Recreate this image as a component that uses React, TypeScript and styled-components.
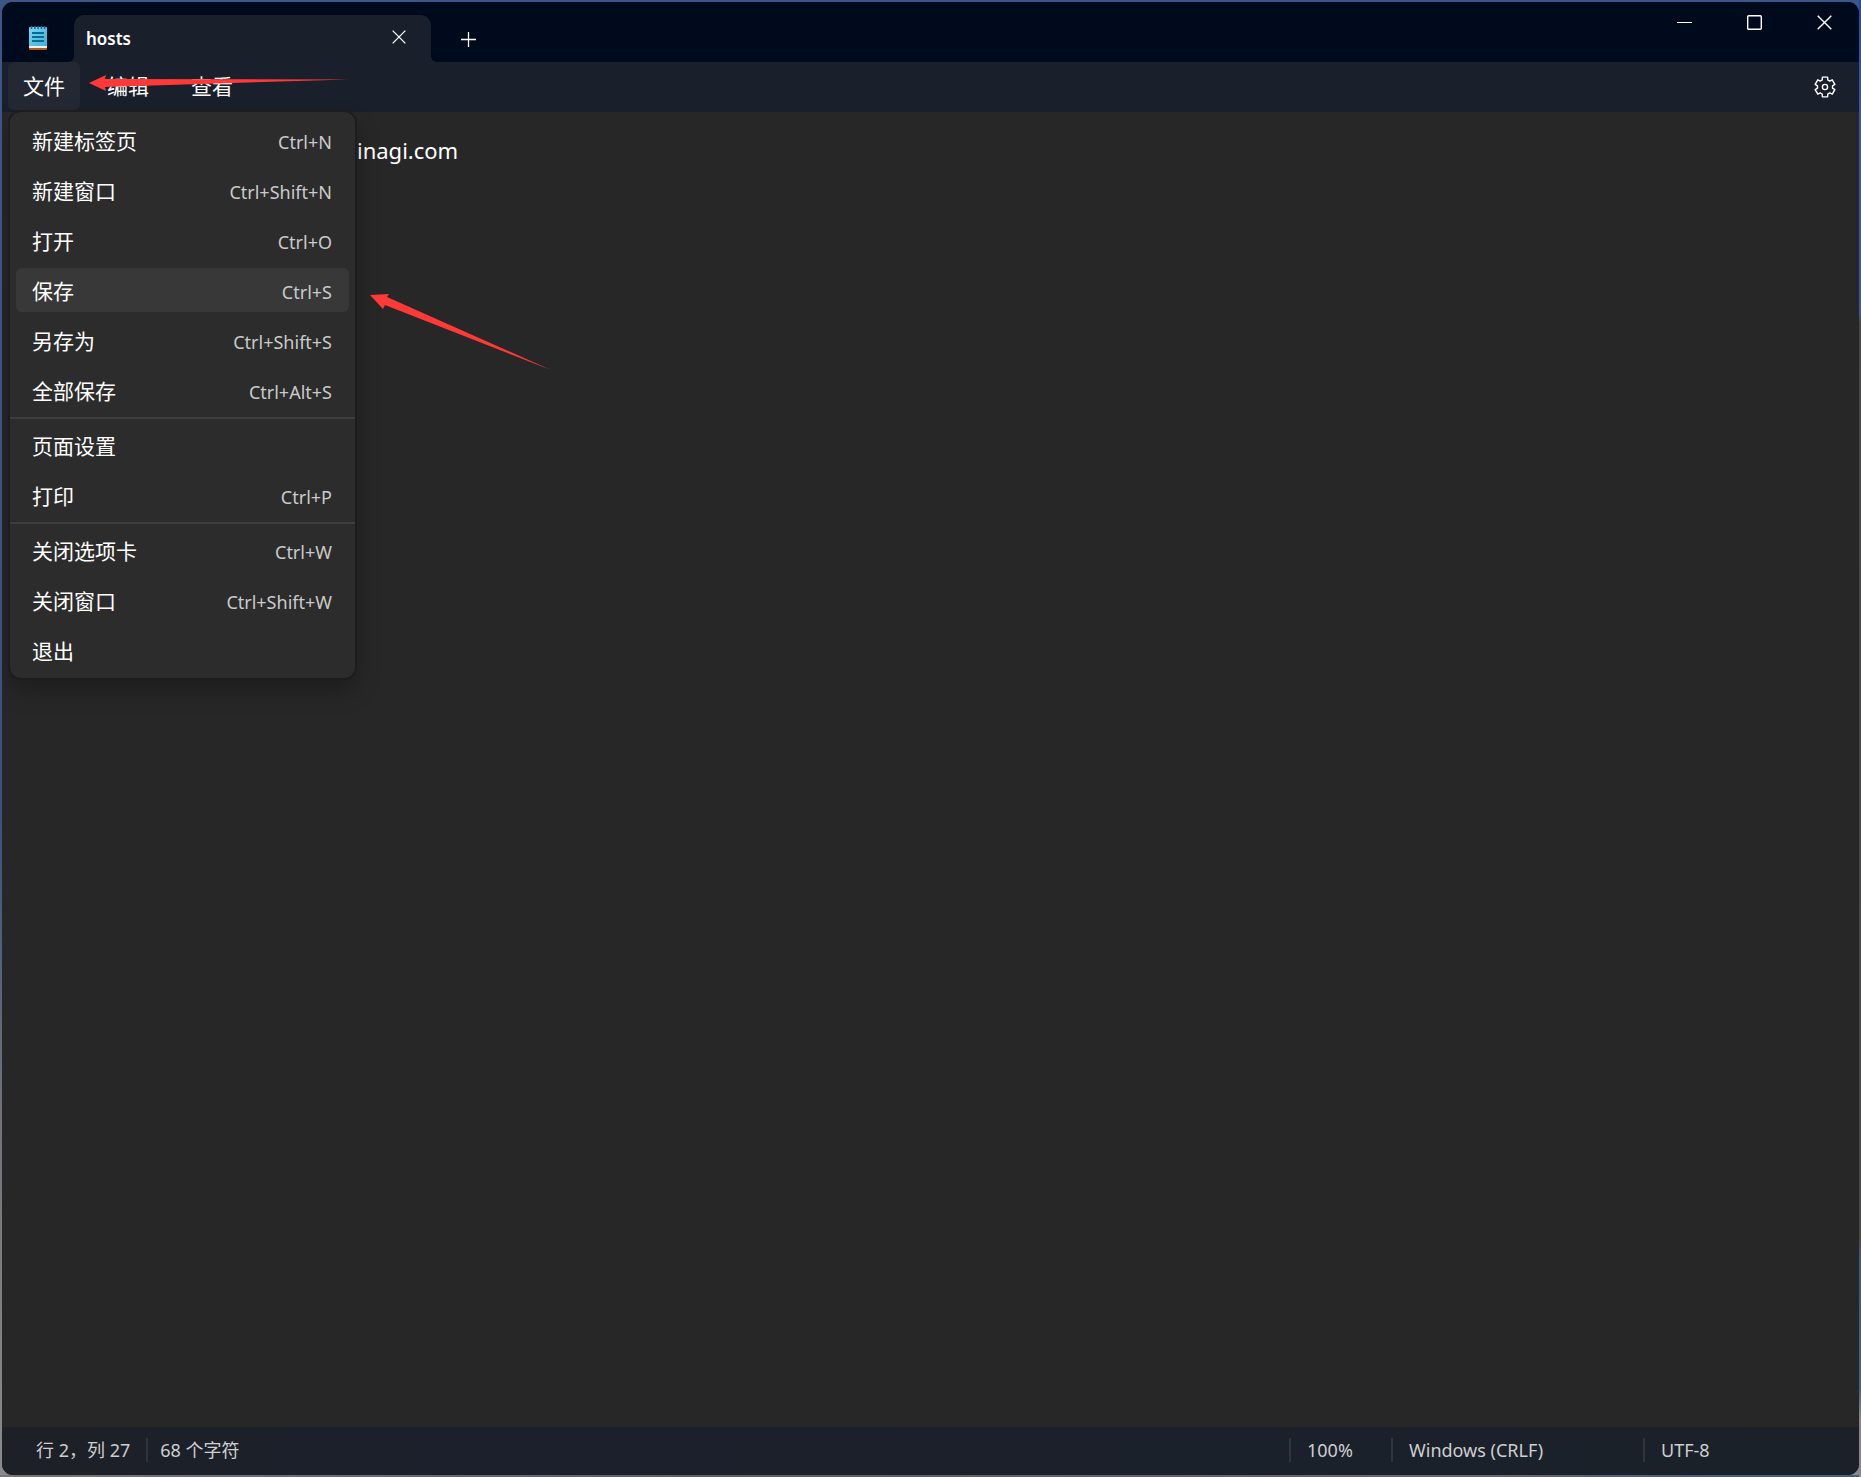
import React, { useState } from 'react';
import styled, { createGlobalStyle } from 'styled-components';

const GlobalStyle = createGlobalStyle`
  *, *::before, *::after { box-sizing: border-box; }
  body { margin: 0; }
  button, textarea { font: inherit; color: inherit; border: 0; background: none; padding: 0; }
`;

const Desktop = styled.div`
  min-height: 100vh;
  padding: 2px;
  display: flex;
  background:
    linear-gradient(#1c4fa0, #3d5a94 8%, #3d5a94 21%, #474747 22%, #4a4a4a 84%, #3f5a78 85%, #45627f 94%, #8a8484 96%) right / 2px 100% no-repeat,
    linear-gradient(90deg, #77757a, #5f6068 40%, #6a666c 80%, #46607f 92%) bottom / 100% 2px no-repeat,
    linear-gradient(#3d5688, #3a5080 55%, #6f7277 75%, #8a8a8c);
  font-family: "Noto Sans", "Noto Sans CJK SC", sans-serif;
  color: #fff;
`;

const Window = styled.main`
  position: relative;
  flex: 1;
  display: flex;
  flex-direction: column;
  overflow: hidden;
  border-radius: 11px;
  background: #272727;
`;

const TitleBar = styled.header`
  display: flex;
  align-items: flex-end;
  height: 60px;
  background: #000a1d;
`;

const AppIcon = styled.svg`
  width: 18px;
  height: 24px;
  margin: 0 27px 12px 27px;
`;

const Tab = styled.div`
  position: relative;
  display: flex;
  align-items: center;
  width: 357px;
  height: 47px;
  padding: 0 20px 0 12px;
  border-radius: 10px 10px 0 0;
  background: #1a202b;
  font-size: 17px;
  font-weight: 600;

  &::before, &::after {
    content: "";
    position: absolute;
    bottom: 0;
    width: 6px;
    height: 6px;
  }
  &::before { right: 100%; background: radial-gradient(circle at 0 0, transparent 6px, #1a202b 6px); }
  &::after { left: 100%; background: radial-gradient(circle at 100% 0, transparent 6px, #1a202b 6px); }
`;

const TabName = styled.span`
  flex: 1;
`;

const IconButton = styled.button<{ $width: number; $height: number }>`
  display: grid;
  place-items: center;
  width: ${p => p.$width}px;
  height: ${p => p.$height}px;
`;

const TabClose = styled(IconButton)`
  margin-bottom: 3px;
`;

const WindowControls = styled.div`
  display: flex;
  align-self: flex-start;
  margin-left: auto;
`;

const MenuBar = styled.nav`
  display: flex;
  align-items: flex-start;
  height: 50px;
  padding: 0 9px 0 6px;
  background: #1a202b;
  font-size: 21px;
`;

const MenuButton = styled.button<{ $open?: boolean }>`
  width: 72px;
  height: 48px;
  margin-right: 12px;
  padding-bottom: 2px;
  border-radius: 6px;
  background: ${p => (p.$open ? '#232832' : 'transparent')};
`;

const Settings = styled.div`
  margin-left: auto;
`;

const Editor = styled.textarea`
  flex: 1;
  padding: 22px 16px 16px 355px;
  resize: none;
  outline: 0;
  font-size: 22px;
  line-height: 32px;
`;

const Dropdown = styled.div`
  position: absolute;
  top: 110px;
  left: 8px;
  display: flex;
  flex-direction: column;
  width: 345px;
  padding: 3px 0;
  border-radius: 11px;
  background: #2c2c2c;
  box-shadow: 0 0 0 2px #1d1d1d, 0 12px 24px rgba(0, 0, 0, 0.28);
`;

const MenuItem = styled.button<{ $active?: boolean }>`
  display: flex;
  align-items: center;
  justify-content: space-between;
  height: 44px;
  margin: 3px 6px;
  padding: 0 17px 0 16px;
  border-radius: 6px;
  background: ${p => (p.$active ? '#383838' : 'transparent')};
  font-size: 21px;
`;

const Shortcut = styled.kbd`
  padding-top: 3px;
  font-family: "Noto Sans", sans-serif;
  font-size: 18px;
  color: #cacaca;
`;

const Divider = styled.hr`
  width: 100%;
  height: 2px;
  margin: 2px 0 1px;
  border: 0;
  background: #3d3d3d;
`;

const StatusBar = styled.footer`
  display: flex;
  align-items: center;
  height: 48px;
  padding: 0 0 2px 34px;
  background: linear-gradient(90deg, #1d2026, #1b202c 25%, #1b2129);
  font-size: 18px;
  color: #cdcfd1;
`;

const StatusCell = styled.span<{ $width?: number; $divided?: boolean }>`
  width: ${p => (p.$width ? p.$width + 'px' : 'auto')};
  height: 24px;
  padding: 0 16px 0 ${p => (p.$width ? 16 : p.$divided ? 12 : 0)}px;
  border-left: ${p => (p.$divided ? '2px solid #30353d' : '0')};
  line-height: 24px;
  white-space: nowrap;
`;

const Spacer = styled.span`
  flex: 1;
`;

const Arrow = styled.svg<{ $x: number; $y: number }>`
  position: absolute;
  left: ${p => p.$x}px;
  top: ${p => p.$y}px;
  fill: #ff3838;
  pointer-events: none;
`;

type Entry = { label: string; keys?: string } | 'divider';

const entries: Entry[] = [
  { label: '新建标签页', keys: 'Ctrl+N' },
  { label: '新建窗口', keys: 'Ctrl+Shift+N' },
  { label: '打开', keys: 'Ctrl+O' },
  { label: '保存', keys: 'Ctrl+S' },
  { label: '另存为', keys: 'Ctrl+Shift+S' },
  { label: '全部保存', keys: 'Ctrl+Alt+S' },
  'divider',
  { label: '页面设置' },
  { label: '打印', keys: 'Ctrl+P' },
  'divider',
  { label: '关闭选项卡', keys: 'Ctrl+W' },
  { label: '关闭窗口', keys: 'Ctrl+Shift+W' },
  { label: '退出' },
];

const Cross = ({ size }: { size: number }) => (
  <svg width={size} height={size} viewBox="0 0 15 15" stroke="#fff" strokeWidth="1.4">
    <path d="M.7 .7 14.3 14.3M14.3 .7 .7 14.3" />
  </svg>
);

const Notepad = () => (
  <AppIcon viewBox="0 0 18 24">
    <defs>
      <linearGradient id="page" x1="0" y1="0" x2="1" y2="1">
        <stop offset="0" stopColor="#79d8f2" />
        <stop offset="1" stopColor="#3fb0d6" />
      </linearGradient>
    </defs>
    <path d="M0 19h18v4a1 1 0 0 1-1 1H1a1 1 0 0 1-1-1z" fill="#b0590f" />
    <path d="M0 19h18v3H0z" fill="#f1efed" />
    <path d="M0 2a1 1 0 0 1 1-1h16a1 1 0 0 1 1 1v18H0z" fill="url(#page)" />
    <path d="M2.5 0v3M5.8 0v3M9.1 0v3M12.4 0v3M15.6 0v3" stroke="#126a8f" strokeWidth="1.5" />
    <path d="M3 7h12M3 11h12M3 15h12" stroke="#0a6a96" strokeWidth="2" />
  </AppIcon>
);

// Six teeth, each given by its two root points and two tip points (angle, radius).
const gearPoints = [0, 60, 120, 180, 240, 300]
  .flatMap(base => [[-21, 7.6], [-15, 10.2], [15, 10.2], [21, 7.6]].map(([a, r]) => {
    const t = ((base + a - 90) * Math.PI) / 180;
    return `${(11 + r * Math.cos(t)).toFixed(2)},${(11 + r * Math.sin(t)).toFixed(2)}`;
  }))
  .join(' ');

export default function App() {
  const [text, setText] = useState('inagi.com');
  return (
    <>
      <GlobalStyle />
      <Desktop>
        <Window>
          <TitleBar>
            <Notepad />
            <Tab>
              <TabName>hosts</TabName>
              <TabClose $width={24} $height={24} aria-label="关闭选项卡"><Cross size={14} /></TabClose>
            </Tab>
            <IconButton $width={74} $height={46} aria-label="新建标签页">
              <svg width="15" height="15" viewBox="0 0 15 15" stroke="#fff" strokeWidth="1.3"><path d="M7.5 0v15M0 7.5h15" /></svg>
            </IconButton>
            <WindowControls>
              <IconButton $width={70} $height={41} aria-label="最小化">
                <svg width="15" height="15" viewBox="0 0 15 15" stroke="#fff"><path d="M0 7.5h15" /></svg>
              </IconButton>
              <IconButton $width={70} $height={41} aria-label="最大化">
                <svg width="15" height="15" viewBox="0 0 15 15" fill="none" stroke="#fff" strokeWidth="1.4"><rect x=".7" y=".7" width="13.6" height="13.6" rx="1" /></svg>
              </IconButton>
              <IconButton $width={70} $height={41} aria-label="关闭"><Cross size={15} /></IconButton>
            </WindowControls>
          </TitleBar>
          <MenuBar>
            <MenuButton $open>文件</MenuButton>
            <MenuButton>编辑</MenuButton>
            <MenuButton>查看</MenuButton>
            <Settings>
              <IconButton $width={50} $height={50} aria-label="设置">
                <svg width="22" height="22" viewBox="0 0 22 22" fill="none" stroke="#fff" strokeWidth="1.4" strokeLinejoin="round">
                  <polygon points={gearPoints} />
                  <circle cx="11" cy="11" r="2.6" />
                </svg>
              </IconButton>
            </Settings>
          </MenuBar>
          <Editor aria-label="hosts" spellCheck={false} value={text} onChange={e => setText(e.target.value)} />
          <StatusBar>
            <StatusCell>行 2，列 27</StatusCell>
            <StatusCell $divided>68 个字符</StatusCell>
            <Spacer />
            <StatusCell $divided $width={102}>100%</StatusCell>
            <StatusCell $divided $width={252}>Windows (CRLF)</StatusCell>
            <StatusCell $divided $width={216}>UTF-8</StatusCell>
          </StatusBar>
          <Dropdown>
            {entries.map((e, i) =>
              e === 'divider' ? (
                <Divider key={i} />
              ) : (
                <MenuItem key={i} $active={e.label === '保存'}>
                  {e.label}
                  {e.keys && <Shortcut>{e.keys}</Shortcut>}
                </MenuItem>
              )
            )}
          </Dropdown>
          <Arrow $x={87} $y={73} width="260" height="17" viewBox="0 0 260 17">
            <path d="M0 8 17 0 16 4 259 4.4 16 12 17 16Z" />
          </Arrow>
          <Arrow $x={368} $y={291} width="182" height="78" viewBox="0 0 182 78">
            <path d="M0 2 19 1 17 4 181 77 15 12 13 16Z" />
          </Arrow>
        </Window>
      </Desktop>
    </>
  );
}
